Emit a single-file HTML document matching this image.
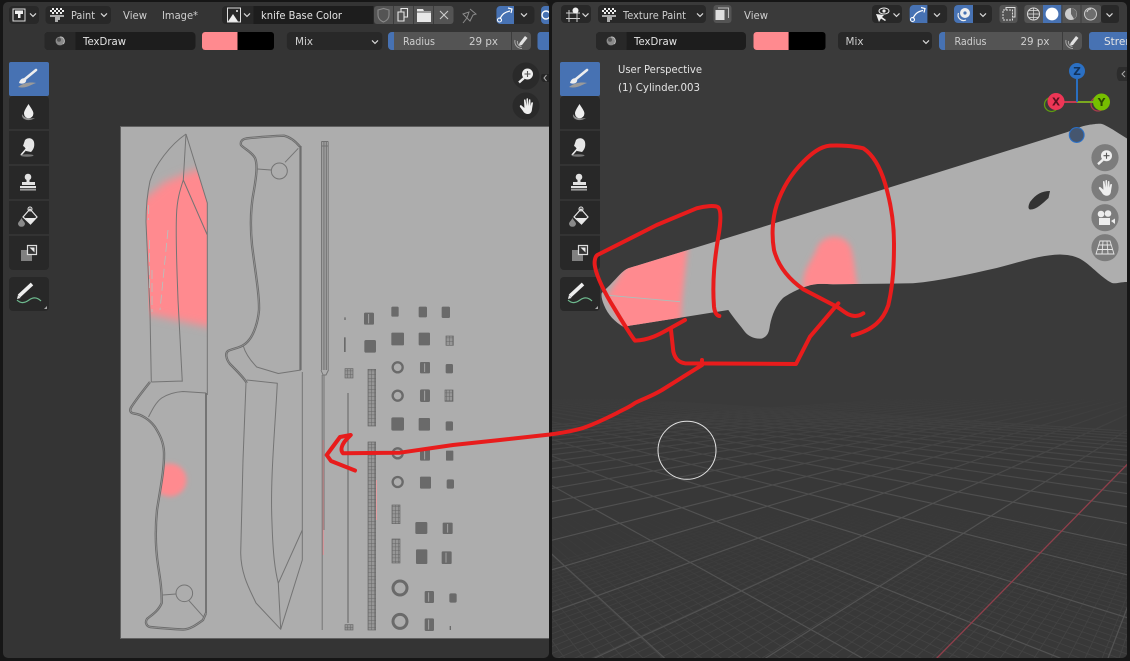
<!DOCTYPE html>
<html><head><meta charset="utf-8"><title>Texture Paint</title>
<style>
html,body{margin:0;padding:0;background:#161616;width:1130px;height:661px;overflow:hidden}
svg{display:block}
text{font-family:"DejaVu Sans","Liberation Sans",sans-serif;font-size:10.5px;fill:#cfcfcf}
.w{fill:#e4e4e4}
.k{fill:none;stroke:#747474;stroke-width:1;stroke-linejoin:round}
.h{fill:none;stroke:#6e6e6e;stroke-width:2.4;stroke-linejoin:round}
.hl{fill:none;stroke:#a8a8a8;stroke-width:.5;stroke-linejoin:round}
.r{fill:none;stroke:#e81c1c;stroke-width:4;stroke-linecap:round;stroke-linejoin:round}
.s{fill:#6a6a6a}
.c{fill:none;stroke:#d8d8d8;stroke-width:1.2}
.b{fill:#282828}
.bl{fill:#4772b3}
.g{fill:#545454}
.d{fill:#1d1d1d}
</style></head><body>
<svg width="1130" height="661" viewBox="0 0 1130 661" xmlns="http://www.w3.org/2000/svg">
<defs>
<linearGradient id="gm" gradientUnits="userSpaceOnUse" x1="0" y1="50" x2="0" y2="400"><stop offset="0" stop-color="#525252" stop-opacity="0"/><stop offset=".4" stop-color="#525252" stop-opacity=".45"/><stop offset="1" stop-color="#525252"/></linearGradient>
<linearGradient id="gn" gradientUnits="userSpaceOnUse" x1="0" y1="380" x2="0" y2="780"><stop offset="0" stop-color="#434343" stop-opacity="0"/><stop offset="1" stop-color="#434343"/></linearGradient>
<filter id="b5" x="-30%" y="-30%" width="160%" height="160%"><feGaussianBlur stdDeviation="4.2"/></filter>
<filter id="b3" x="-30%" y="-30%" width="160%" height="160%"><feGaussianBlur stdDeviation="2.8"/></filter>
<filter id="b2" x="-30%" y="-30%" width="160%" height="160%"><feGaussianBlur stdDeviation="2.4"/></filter>
<clipPath id="cl"><rect x="3" y="2" width="546" height="656" rx="5"/></clipPath>
<clipPath id="cr"><rect x="552" y="2" width="575" height="656" rx="5"/></clipPath>
<clipPath id="kn"><path d="M186 134L207.5 203V385H151L146 222C146 210 147 195 150 181C155 165 170 145 186 134Z"/></clipPath>
<clipPath id="hn"><path d="M164 446L164 462L157 510V540L206 540V440Z"/></clipPath>
<clipPath id="kn3"><path id="kp" d="M601.7 293L610 285C618 277 622 271 628.3 268.3L736.7 235L920 178L1066.7 132.3C1075 129 1082 126 1088.3 125C1095 124 1099 123.5 1102 124C1108 126 1118 133 1127 138.5V282C1120 282 1116 284 1112 283C1105 280 1095 270 1086.7 263.3C1078 256 1070 255 1060 254.5C1040 255 1020 262 996.7 268C970 274 940 281 913 283.3L833 284.3C825 284 820 283.5 814 284.5C805 285.5 790 293 783 298C776 305 772 315 770 325C769 332 768 336 762 338.5C755 339.5 748 336 745 332C740 325 735 320 728.3 310L623.3 326.7C615 322 608 315 604 305C602 300 601 296 601.7 293Z"/></clipPath>
<pattern id="ck" width="4" height="4" patternUnits="userSpaceOnUse"><rect width="2" height="2" fill="#eee"/><rect x="2" y="2" width="2" height="2" fill="#eee"/></pattern>
<pattern id="gd" width="9" height="11" patternUnits="userSpaceOnUse"><rect width="9" height="11" fill="#969696"/><path d="M0 0H9M0 0V11" stroke="#666" stroke-width="3"/></pattern>
<path id="ch" d="M-3 -1.6L0 1.4L3 -1.6" fill="none" stroke="#d8d8d8" stroke-width="1.2"/>
<path id="h1" d="M150 382C142 392 136 400 132 406C129 410 130 413 134 413.5C142 414.5 150 420 155 427C160 435 163.5 442 164 452C164.5 470 160 490 157 510C155 530 155.5 548 158 565C160 578 162 590 161.7 603C158 612 150 616 147 619C145 622 146 626 150 627C160 628 172 629 183 629.5C190 629.5 196 625 203 620L206 613"/>
<path id="h2" d="M246.7 383C245 379 238 372 230 364C226 359 225 353 228 351C234 348 243 348 249 340C254 334 258 322 259 310C259.5 295 255 270 252 245C250 225 251 205 254 190C256 178 258 165 255 158C252 152 243 148 241 145C240 141 243 139 246 138.5C260 137 275 136 284 135.7C290 137 296 142 300 146.7"/>
<g id="tools">
<rect x="9" y="96" width="40" height="174" rx="4" fill="#282828"/>
<rect x="9" y="62" width="40" height="34" fill="#4772b3" rx="2"/>
<path d="M9 130H49M9 165H49M9 200H49M9 235H49" stroke="#3e3e3e"/>
<rect x="9" y="277" width="40" height="34" rx="4" fill="#282828"/>
<path d="M36 70L25 79" stroke="#eee" stroke-width="2.6" stroke-linecap="round"/>
<path d="M19 83C20 79 23 77 26 79C27 82 24 85 19 83Z" fill="#eee"/>
<path d="M18 87C24 82 32 82 36 83C30 85 26 89 18 87Z" fill="#9a9a9a"/>
<path d="M22 114C21 120 29 122 35 118C29 119 24 118 22 114Z" fill="#8e8e8e"/>
<path d="M28.5 104C26 108 24 111 24 113.5A4.7 4.7 0 0 0 33.4 113.5C33.4 111 31 108 28.5 104Z" fill="#eee"/>
<path d="M25 140C28 137 33 138 34 142C35 147 33 150 31 152L26 151C26 149 25 147 23 146Z" fill="#e6e6e6"/>
<path d="M28 147L21 155" stroke="#eee" stroke-width="1.6"/>
<ellipse cx="27" cy="155.5" rx="6.5" ry="1.2" fill="#777"/>
<circle cx="28" cy="177" r="3.3" fill="#e2e2e2"/><rect x="26.5" y="179" width="3" height="3" fill="#e2e2e2"/>
<rect x="22" y="182" width="13" height="3" fill="#e2e2e2"/><rect x="20" y="186" width="16" height="2.2" fill="#e2e2e2"/><rect x="20" y="189" width="16" height="1.6" fill="#999"/>
<path d="M30 209L37 217L30.5 224L23 217Z" fill="none" stroke="#e4e4e4" stroke-width="1.2"/>
<path d="M25 218H36L30.5 224Z" fill="#e8e8e8"/><circle cx="30" cy="209" r="2" fill="none" stroke="#e4e4e4"/>
<path d="M21.5 218C20 221 18 222 18 224A3.6 3.6 0 0 0 25 224C25 222 23 221 21.5 218Z" fill="#8a8a8a"/>
<rect x="21" y="250" width="11" height="11" fill="#808080"/>
<rect x="27.5" y="245.5" width="9" height="9" fill="#333" stroke="#ddd" stroke-width="1.2"/><path d="M29.5 247.5H34.5V252.5Z" fill="#e8e8e8"/>
<path d="M32 284L19 296" stroke="#eee" stroke-width="3.6"/><path d="M17 299L18 295L20.5 298Z" fill="#eee"/>
<path d="M17 300C21 304 25 303 29 300C33 297 37 297 41 301" fill="none" stroke="#6db98e" stroke-width="1.2"/>
<path d="M47 306V309H44Z" fill="#aaa"/>
</g>
<g id="pen"><path d="M-1.5 2L4 -5L6.5 -3L1 4L-2 4.5Z" fill="#e2e2e2"/><path d="M-3.5 0A4.5 4.5 0 0 0 0.5 5.5M-6 -1A7 7 0 0 0 1 7.5" fill="none" stroke="#aaa" stroke-width="1"/></g>
<g id="mag"><circle cx="1.5" cy="-2" r="5.5" fill="#eee"/><path d="M-2 2L-7 6.5" stroke="#eee" stroke-width="2.4"/><path d="M-1.5 -2H4.5M1.5 -5V1" stroke="#555" stroke-width="1.1"/></g>
<g id="hand"><path d="M-6 1L-3 5C-2 7 0 8 2 8C5 8 6 5 6 3L7 -3C7 -4 5.5 -4 5.2 -3L4.6 0L4.4 -6C4.4 -7 3 -7 3 -6L2.6 0L2 -7C2 -8 .6 -8 .5 -7L.6 0L-.5 -6C-.7 -7 -2 -6.8 -2 -5.8L-1.6 2L-4.6 -.6C-5.6 -1.4 -6.6 0 -6 1Z" fill="#eee"/></g>
<g id="curve"><path d="M-5 4C-3 -1 0 -3 5 -4" fill="none" stroke="#fff" stroke-width="1.2"/><circle cx="-5.5" cy="5" r="2" fill="none" stroke="#fff" stroke-width="1.1"/><path d="M3 -7L7 -6L6 -2" fill="none" stroke="#fff" stroke-width="1.2"/></g>
<g id="sph"><circle r="4.4" fill="#8b8b8b"/><circle cx="-1" cy="-1.2" r="2" fill="#555"/><path d="M0 -4A4 4 0 0 1 3 3" stroke="#bbb" fill="none"/></g>
</defs>

<rect width="1130" height="661" fill="#161616"/>

<!-- LEFT PANEL -->
<g clip-path="url(#cl)">
<rect x="3" y="2" width="546" height="656" fill="#343434"/>
<!-- UV image -->
<rect x="120.5" y="126.5" width="440" height="512" fill="#adadad" stroke="#606060"/>
<g clip-path="url(#kn)"><path d="M138 204L165 182L192 171L215 166V328L190 323L140 312Z" fill="#ff8a8f" filter="url(#b5)"/></g>
<g clip-path="url(#hn)"><circle cx="170" cy="480" r="16.5" fill="#ff8a8f" filter="url(#b2)"/></g>
<path d="M323 440V555" stroke="#f4898e" stroke-width="1.4" opacity=".8"/>
<rect x="373" y="477" width="1.3" height="35" fill="#f39ca0"/><rect x="375.5" y="480" width="1.3" height="40" fill="#f39ca0"/>
<!-- first knife -->
<path class="k" d="M186 134C170 145 155 165 150 181C147 195 146 210 146 222L150 312L151.3 382M186 134L207.3 203V395M186 134L183.3 180L207.3 235M183.3 180C180 190 177 200 176.5 215C175.5 240 177 270 178 300L182.3 381.7M151.3 382L182.3 381"/>
<path d="M148.5 205V220M149.5 240V290M152 270V312M168 230L162 290L160 310" fill="none" stroke="#b2c4c0" stroke-width=".8" stroke-dasharray="9 4"/>
<use href="#h1" class="h"/><use href="#h1" class="hl"/>
<path d="M206 613V393" fill="none" stroke="#6e6e6e" stroke-width="1.8"/>
<path class="k" d="M206 393L183 391.5C175 392 168 394 161.7 398C156 402 152 410 148.5 417M176 594L162.7 595M189 600.7L203.3 616.7"/>
<circle class="k" cx="184.3" cy="593.3" r="8.3"/>
<!-- second knife -->
<use href="#h2" class="h"/><use href="#h2" class="hl"/>
<path d="M300.5 146V370" fill="none" stroke="#6e6e6e" stroke-width="2.2"/>
<path class="k" d="M301 370L278.3 373.5L256.7 367C250 360 245 352 243.3 346M271 170L257.3 169M285 162.3L298.3 148.3"/>
<circle class="k" cx="279.3" cy="171" r="8"/>
<path class="k" d="M246.7 380L277.3 383.3C275 430 270 480 272 523C273 555 275 570 278.3 583.3L280.7 629.3L256 603C250 590 241 575 240.7 553L243 460L246 383M302.3 372V560L280.7 629.3M302.3 530L278.3 583.3"/>
<!-- rods -->
<path d="M321.5 141.5V370M323.2 141.5V370M324.9 141.5V370M326.6 141.5V370M328.2 141.5V370M321.5 141.5H328.2M321.5 146H328.2M321 370L323 375H326L328.5 370" fill="none" stroke="#727272" stroke-width=".9"/>
<path d="M322.2 375V630M324 375V530" fill="none" stroke="#757575" stroke-width="1"/>
<path d="M348 393V623" stroke="#707070" stroke-width="1.2"/>
<!-- small islands -->
<g transform="translate(320 290) scale(.33333)">
<rect class="s" x="73" y="82" width="4" height="8"/><rect class="s" x="132" y="68" width="30" height="36" rx="4"/><rect class="s" x="214" y="50" width="22" height="30" rx="4"/><rect class="s" x="296" y="50" width="25" height="32" rx="4"/><rect class="s" x="365" y="50" width="25" height="34" rx="4"/>
<rect class="s" x="72" y="142" width="5" height="44"/><rect class="s" x="133" y="150" width="35" height="38" rx="5"/><rect class="s" x="214" y="128" width="38" height="38" rx="3"/><rect class="s" x="296" y="128" width="34" height="38" rx="3"/><rect x="378" y="138" width="22" height="28" fill="url(#gd)" stroke="#666" stroke-width="2"/>
<rect x="75" y="236" width="24" height="28" fill="url(#gd)" stroke="#666" stroke-width="2"/>
<rect x="144" y="238" width="23" height="170" fill="url(#gd)" stroke="#666" stroke-width="2"/>
<rect class="s" x="300" y="216" width="30" height="34" rx="3"/><rect class="s" x="377" y="222" width="22" height="28" rx="4"/>
<rect class="s" x="300" y="298" width="30" height="38" rx="5"/><rect x="375" y="300" width="24" height="34" fill="url(#gd)" stroke="#666" stroke-width="2"/>
<rect class="s" x="214" y="382" width="38" height="40" rx="5"/><rect class="s" x="296" y="384" width="34" height="38" rx="3"/><rect class="s" x="377" y="394" width="22" height="28" rx="4"/>
<rect x="144" y="456" width="23" height="564" fill="url(#gd)" stroke="#666" stroke-width="2"/>
<rect class="s" x="300" y="474" width="30" height="38" rx="4"/><rect class="s" x="378" y="482" width="22" height="30" rx="2"/>
<rect class="s" x="300" y="560" width="33" height="36" rx="3"/><rect class="s" x="380" y="568" width="22" height="28" rx="5"/>
<rect x="216" y="645" width="24" height="56" fill="url(#gd)" stroke="#666" stroke-width="2"/>
<rect class="s" x="286" y="696" width="36" height="36" rx="4"/><rect class="s" x="368" y="698" width="30" height="34" rx="3"/>
<rect x="216" y="747" width="24" height="72" fill="url(#gd)" stroke="#666" stroke-width="2"/>
<rect class="s" x="288" y="778" width="34" height="44" rx="3"/><rect class="s" x="365" y="784" width="30" height="38" rx="3"/>
<rect class="s" x="314" y="903" width="28" height="36" rx="4"/><rect class="s" x="388" y="910" width="22" height="28" rx="5"/>
<rect class="s" x="314" y="985" width="28" height="38" rx="4"/><rect class="s" x="389" y="1008" width="4" height="12"/>
<rect x="75" y="1004" width="24" height="16" fill="url(#gd)" stroke="#666" stroke-width="2"/>
<path d="M146 72V100M314 220V246M314 302V332M314 478V508M383 702V728M378 788V818M326 907V935M326 989V1019" stroke="#adadad" stroke-width="2.5"/>
<g fill="none" stroke="#6a6a6a" stroke-width="7"><circle cx="233" cy="232" r="15"/><circle cx="233" cy="317" r="15"/><circle cx="233" cy="490" r="15"/><circle cx="233" cy="576" r="15"/></g>
<g fill="none" stroke="#6a6a6a" stroke-width="9"><circle cx="240" cy="894" r="21"/><circle cx="240" cy="994" r="21"/></g>
</g>
<!-- header -->
<rect x="9" y="6" width="30" height="18" rx="4" class="b"/>
<rect x="13" y="9" width="12" height="12" fill="none" stroke="#ddd"/><path d="M15 10.5H23V14H20.5V18H18V14H15Z" fill="#eee"/>
<use href="#ch" x="33" y="15"/>
<rect x="45.5" y="6" width="65.5" height="18" rx="4" class="b"/>
<rect x="50" y="8" width="14" height="6" fill="url(#ck)"/><path d="M50 15H64V17H60V20H58V22H55V17H50Z" fill="#aaa"/>
<text x="71" y="19" textLength="24" lengthAdjust="spacingAndGlyphs">Paint</text><use href="#ch" x="104" y="15"/>
<text x="123" y="19" textLength="24" lengthAdjust="spacingAndGlyphs">View</text>
<text x="162" y="19" textLength="36" lengthAdjust="spacingAndGlyphs">Image*</text>
<rect x="222" y="6" width="151" height="18" rx="4" class="b"/>
<rect x="253.5" y="6" width="120" height="18" class="d"/>
<rect x="227.5" y="8" width="13" height="14" fill="none" stroke="#ddd"/><path d="M228 21.5L233 14L238 21.5Z" fill="#eee"/><circle cx="237" cy="11" r="1" fill="#eee"/>
<use href="#ch" x="247" y="15"/>
<text x="261" y="19" textLength="81" lengthAdjust="spacingAndGlyphs" class="w">knife Base Color</text>
<rect x="374" y="6" width="79.5" height="18" rx="3" class="g"/>
<path d="M393.5 6V24M413.5 6V24M433.5 6V24" stroke="#3c3c3c"/>
<path d="M378 10L383.5 8.5L389 10V15C389 19 386 21 383.5 22C381 21 378 19 378 15Z" fill="none" stroke="#8a8a8a" stroke-width="1.1"/>
<path d="M398 12H404V21H398ZM401 12V8.5H407.5V17H404" fill="none" stroke="#e6e6e6" stroke-width="1.1"/>
<path d="M417 11V9H423L424 11H431V22H417Z" fill="#e8e8e8"/><path d="M417 12H431" stroke="#545454"/>
<path d="M440 11L448 19M448 11L440 19" stroke="#ccc" stroke-width="1.1"/>
<path d="M470 9L476 14L473 15L470 21L467 18L463 23M467 18L463 14L469 12Z" fill="none" stroke="#8a8a8a" stroke-width="1"/>
<rect x="496.4" y="6" width="38" height="18" rx="4" class="b"/><path d="M500 6H514V24H500A4 4 0 0 1 496.4 20V10A4 4 0 0 1 500 6Z" class="bl"/>
<use href="#curve" x="505" y="15"/><use href="#ch" x="524" y="15"/>
<rect x="541" y="6" width="20" height="18" rx="4" class="bl"/><circle cx="546" cy="15" r="4" fill="none" stroke="#fff" stroke-width="1.4"/>
<rect x="44.5" y="32" width="151" height="18" rx="4" class="d"/>
<path d="M48.5 32H75.5V50H48.5A4 4 0 0 1 44.5 46V36A4 4 0 0 1 48.5 32Z" class="b"/><use href="#sph" x="60" y="41"/>
<text x="83" y="45" textLength="43" lengthAdjust="spacingAndGlyphs" class="w">TexDraw</text>
<rect x="202" y="32" width="72" height="18" rx="3" fill="#000"/><path d="M205 32H237.5V50H205A3 3 0 0 1 202 47V35A3 3 0 0 1 205 32Z" fill="#ff8a8f"/>
<rect x="286.8" y="32" width="95.5" height="18" rx="4" class="b"/><text x="295" y="45" textLength="18" lengthAdjust="spacingAndGlyphs">Mix</text><use href="#ch" x="375" y="42"/>
<rect x="388" y="32" width="143" height="18" rx="4" class="g"/><path d="M392 32H394V50H392A4 4 0 0 1 388 46V36A4 4 0 0 1 392 32Z" class="bl"/><path d="M511.5 32V50" stroke="#3c3c3c"/>
<text x="403" y="45" textLength="32" lengthAdjust="spacingAndGlyphs">Radius</text><text x="469" y="45" textLength="29" lengthAdjust="spacingAndGlyphs">29 px</text>
<use href="#pen" x="521" y="41"/>
<rect x="537.5" y="32" width="20" height="18" rx="3" class="bl"/>
<!-- tools -->
<use href="#tools"/>
<circle cx="526" cy="76" r="13.5" fill="#2a2a2a"/><use href="#mag" x="526" y="76"/>
<circle cx="526" cy="106" r="13.5" fill="#2a2a2a"/><use href="#hand" x="526" y="106"/>
<path d="M542 74H549V82H544C541 82 540 76 542 74Z" fill="#262626"/><path d="M546.5 75L544 78L546.5 81" fill="none" stroke="#aaa"/>
</g>

<!-- RIGHT PANEL -->
<g clip-path="url(#cr)">
<rect x="552" y="2" width="575" height="656" fill="#3a3a3a"/>
<rect x="552" y="430" width="575" height="228" fill="#383838"/>
<g transform="translate(550 380) scale(.37 .33333)" fill="none">
<path stroke="url(#gn)" stroke-width="2.4" d="M1800 -18L-900 835M1800 -18L-854 835M1800 -18L-808 835M1800 -18L-762 835M1800 -18L-716 835M1800 -18L-670 835M1800 -18L-624 835M1800 -18L-578 835M1800 -18L-532 835M1800 -18L-486 835M1800 -18L-440 835M1800 -18L-394 835M1800 -18L-348 835M1800 -18L-302 835M1800 -18L-256 835M1800 -18L-210 835M1800 -18L-164 835M1800 -18L-118 835M1800 -18L-72 835M1800 -18L-26 835M1800 -18L20 835M1800 -18L66 835M1800 -18L112 835M1800 -18L158 835M1800 -18L204 835M1800 -18L250 835M1800 -18L296 835M1800 -18L342 835M1800 -18L388 835M1800 -18L434 835M1800 -18L480 835M1800 -18L526 835M1800 -18L572 835M1800 -18L618 835M1800 -18L664 835M1800 -18L710 835M1800 -18L756 835M1800 -18L802 835M1800 -18L848 835M1800 -18L894 835M1800 -18L940 835M1800 -18L986 835M1800 -18L1032 835M1800 -18L1078 835M1800 -18L1124 835M1800 -18L1170 835M1800 -18L1216 835M1800 -18L1262 835M1800 -18L1308 835M1800 -18L1354 835M1800 -18L1400 835M1800 -18L1446 835M1800 -18L1492 835M1800 -18L1538 835M1800 -18L1584 835
M-500 5L-225 835M-500 5L-172 835M-500 5L-119 835M-500 5L-66 835M-500 5L-13 835M-500 5L40 835M-500 5L93 835M-500 5L146 835M-500 5L199 835M-500 5L252 835M-500 5L305 835M-500 5L358 835M-500 5L411 835M-500 5L464 835M-500 5L517 835M-500 5L570 835M-500 5L623 835M-500 5L676 835M-500 5L729 835M-500 5L782 835M-500 5L845 835M-500 5L898 835M-500 5L951 835M-500 5L1004 835M-500 5L1057 835M-500 5L1110 835M-500 5L1163 835M-500 5L1216 835M-500 5L1269 835M-500 5L1322 835M-500 5L1380 835M-500 5L1433 835M-500 5L1486 835M-500 5L1539 835M-500 5L1592 835M-500 5L1645 835M-500 5L1698 835M-500 5L1751 835M-500 5L1804 835M-500 5L1857 835M-500 5L1915 835M-500 5L1968 835M-500 5L2021 835M-500 5L2074 835M-500 5L2127 835M-500 5L2180 835M-500 5L2233 835M-500 5L2286 835M-500 5L2339 835M-500 5L2392 835M-500 5L2450 835M-500 5L2503 835M-500 5L2556 835M-500 5L2609 835M-500 5L2662 835M-500 5L2715 835M-500 5L2768 835M-500 5L2821 835M-500 5L2874 835M-500 5L2927 835"/>
<path stroke="url(#gm)" stroke-width="3.4" d="M1800 -18L1508 835M1800 -18L582 835M1800 -18L119 835M1800 -18L-344 835M1800 -18L-807 835M1800 -18L-1270 835M1800 -18L-1733 835M1800 -18L-2196 835M1800 -18L-2659 835M1800 -18L-3122 835M1800 -18L-3585 835M1800 -18L-4048 835M1800 -18L-4511 835M1800 -18L-4974 835M1800 -18L-5437 835M1800 -18L-5900 835M1800 -18L-6363 835M1800 -18L-6826 835M1800 -18L-7289 835M1800 -18L-7752 835M1800 -18L-8215 835
M-500 5L-225 835M-500 5L310 835M-500 5L845 835M-500 5L1380 835M-500 5L1915 835M-500 5L2450 835M-500 5L2985 835M-500 5L3520 835M-500 5L4055 835M-500 5L4590 835M-500 5L5125 835M-500 5L5660 835M-500 5L6195 835M-500 5L6730 835M-500 5L7265 835M-500 5L7800 835M-500 5L8335 835M-500 5L8870 835M-500 5L9405 835M-500 5L9940 835M-500 5L10475 835M-500 5L11010 835"/>
<path stroke="#8f3f4b" stroke-width="3.8" d="M1045 835L1600 208"/>
</g>
<!-- 3D knife -->
<use href="#kp" fill="#aeaeae"/>
<g clip-path="url(#kn3)">
<path d="M607 297L628 262L688 245L682 300L680 335L626 331Z" fill="#ff8a8f" filter="url(#b3)"/>
<path d="M803 285C803 268 812 262 817 248C822 234 845 232 851 248C855 262 855 275 858 290H803Z" fill="#ff8a8f" filter="url(#b3)"/>
</g>
<path d="M605 295L680 301.7" stroke="#a9c0bb" stroke-width=".9"/>
<path d="M1050 191C1042 191 1036 194 1030 202C1028 206 1028 209 1030 209.5C1036 210 1042 204 1048.5 198Z" fill="#333"/>
<circle cx="687" cy="450.3" r="29" fill="none" stroke="#e2e2e2" stroke-width="1"/>
<!-- gizmo -->
<circle cx="1051.5" cy="104.5" r="7" fill="none" stroke="#5f9a10" stroke-width="1.3"/><circle cx="1098" cy="104" r="7" fill="none" stroke="#a83a4c" stroke-width="1.3"/>
<path d="M1077 102H1061" stroke="#c43a50" stroke-width="2"/><path d="M1077 102H1095" stroke="#7aa820" stroke-width="2"/><path d="M1077 102V79" stroke="#2a6fc0" stroke-width="2"/>
<circle cx="1077" cy="71" r="8" fill="#2b70c4"/><circle cx="1056" cy="101.5" r="8.5" fill="#ee3656"/><circle cx="1101.5" cy="102" r="8.5" fill="#76bf00"/>
<text x="1077" y="75" text-anchor="middle" style="font-weight:bold;font-size:10.5px;fill:#12335c">Z</text>
<text x="1056" y="105.5" text-anchor="middle" style="font-weight:bold;font-size:10.5px;fill:#5a1020">X</text>
<text x="1101.5" y="106" text-anchor="middle" style="font-weight:bold;font-size:10.5px;fill:#2c4a00">Y</text>
<circle cx="1076.7" cy="135" r="7.4" fill="#45566f" stroke="#2a70c8" stroke-width="1.1"/>
<!-- nav buttons -->
<g fill="#7c7c7c"><circle cx="1105" cy="157.7" r="13.6"/><circle cx="1105" cy="187.7" r="13.6"/><circle cx="1105" cy="217.7" r="13.6"/><circle cx="1105" cy="247.7" r="13.6"/></g>
<use href="#mag" x="1105" y="157.7"/><use href="#hand" x="1105" y="187.7"/>
<circle cx="1101" cy="214" r="3.3" fill="#eee"/><circle cx="1108" cy="213.5" r="3.3" fill="#eee"/><rect x="1099" y="218" width="11" height="7" fill="#eee"/><path d="M1111 221L1115 218.5V224Z" fill="#eee"/>
<path d="M1100 241H1110L1114 254H1096ZM1099 245H1111M1097.5 249.5H1112.5M1103 241L1102 254M1107 241L1108 254" fill="none" stroke="#e6e6e6" stroke-width=".9"/>
<path d="M1119 67H1127V81H1119C1116 79 1116 69 1119 67Z" fill="#2c2c2c"/><path d="M1125 71L1122 74L1125 77" fill="none" stroke="#aaa"/>
<text x="618" y="73" textLength="84" lengthAdjust="spacingAndGlyphs" class="w">User Perspective</text>
<text x="618" y="91" textLength="82" lengthAdjust="spacingAndGlyphs" class="w">(1) Cylinder.003</text>
<!-- header -->
<rect x="561" y="5" width="30" height="18" rx="4" class="b"/>
<path d="M566 13H580M566 18.5H580M569 10V22M577 13V22" stroke="#ccc" stroke-width="1"/><circle cx="575.5" cy="10.5" r="3" fill="#eee"/>
<use href="#ch" x="585.5" y="15"/>
<rect x="598" y="5" width="108" height="18" rx="4" class="b"/>
<rect x="602" y="8" width="14" height="6" fill="url(#ck)"/><path d="M602 15H616V17H612V20H610V22H607V17H602Z" fill="#aaa"/>
<text x="623" y="19" textLength="63" lengthAdjust="spacingAndGlyphs">Texture Paint</text><use href="#ch" x="700" y="15"/>
<rect x="713.5" y="5" width="18" height="18" rx="3" class="g"/><rect x="715.5" y="10" width="9" height="10" fill="#ddd"/><path d="M718 8H728.5V18" fill="none" stroke="#bbb"/>
<text x="744" y="19" textLength="24" lengthAdjust="spacingAndGlyphs">View</text>
<rect x="872" y="5" width="30" height="18" rx="4" class="b"/>
<path d="M876 14L879 22L881 18.5L885 21L886 20L882 17L884 15Z" fill="#eee"/><ellipse cx="884" cy="11" rx="5" ry="3" fill="none" stroke="#eee"/><circle cx="884" cy="11" r="1.6" fill="#eee"/>
<use href="#ch" x="896.5" y="15"/>
<rect x="909.6" y="5" width="37.5" height="18" rx="4" class="b"/><path d="M913 5H927.4V23H913A4 4 0 0 1 909.6 19V9A4 4 0 0 1 913 5Z" class="bl"/><use href="#curve" x="918" y="14.5"/><use href="#ch" x="937" y="15"/>
<rect x="954" y="5" width="38" height="18" rx="4" class="b"/><path d="M958 5H973V23H958A4 4 0 0 1 954 19V9A4 4 0 0 1 958 5Z" class="bl"/>
<circle cx="965" cy="13" r="5" fill="#eee"/><circle cx="965" cy="13" r="1.6" fill="#4772b3"/><path d="M958.5 13A5.5 5.5 0 0 0 966 20" fill="none" stroke="#eee" stroke-width="1.2"/><use href="#ch" x="983" y="15"/>
<rect x="999.5" y="5" width="18" height="18" rx="3" class="g"/><path d="M1003 10H1012.5V20H1003Z" fill="none" stroke="#ddd" stroke-dasharray="2 1"/><path d="M1006 10V7.5H1015V17H1012.5" fill="none" stroke="#ddd"/>
<rect x="1024.3" y="5" width="77" height="18" rx="3" class="g"/><rect x="1043" y="5" width="18.5" height="18" class="bl"/>
<path d="M1061.8 5V23M1081 5V23" stroke="#3c3c3c"/>
<circle cx="1033.5" cy="14" r="6" fill="none" stroke="#ddd" stroke-width="1"/><path d="M1027.5 14H1039.5M1033.5 8V20M1029 10.5H1038M1029 17.5H1038" stroke="#ddd" stroke-width=".7"/>
<circle cx="1052" cy="14" r="6.4" fill="#fff"/>
<circle cx="1071" cy="14" r="6" fill="#ccc"/><path d="M1071 14V8A6 6 0 0 1 1074 19Z" fill="#666"/>
<circle cx="1090.5" cy="14" r="6" fill="#6e6e6e" stroke="#ccc"/><path d="M1087 12A4 4 0 0 1 1091 9" fill="none" stroke="#ddd"/>
<rect x="1101" y="5" width="18" height="18" rx="3" class="b"/><use href="#ch" x="1109.5" y="15"/>
<rect x="596" y="32" width="150" height="18" rx="4" class="d"/><path d="M600 32H626.6V50H600A4 4 0 0 1 596 46V36A4 4 0 0 1 600 32Z" class="b"/><use href="#sph" x="611" y="41"/>
<text x="634" y="45" textLength="43" lengthAdjust="spacingAndGlyphs" class="w">TexDraw</text>
<rect x="753.5" y="32" width="72" height="18" rx="3" fill="#000"/><path d="M756.5 32H788.6V50H756.5A3 3 0 0 1 753.5 47V35A3 3 0 0 1 756.5 32Z" fill="#ff8a8f"/>
<rect x="838" y="32" width="94" height="18" rx="4" class="b"/><text x="845.5" y="45" textLength="18" lengthAdjust="spacingAndGlyphs">Mix</text><use href="#ch" x="926" y="42"/>
<rect x="939" y="32" width="143" height="18" rx="4" class="g"/><path d="M943 32H945V50H943A4 4 0 0 1 939 46V36A4 4 0 0 1 943 32Z" class="bl"/><path d="M1062.5 32V50" stroke="#3c3c3c"/>
<text x="954.5" y="45" textLength="32" lengthAdjust="spacingAndGlyphs">Radius</text><text x="1020.5" y="45" textLength="29" lengthAdjust="spacingAndGlyphs">29 px</text>
<use href="#pen" x="1072" y="41"/>
<rect x="1089" y="32" width="50" height="18" rx="3" class="bl"/><text x="1104" y="45" class="w">Stren</text>
<use href="#tools" x="551"/>
</g>

<!-- red annotations -->
<g transform="translate(590 130) scale(.33333)" fill="none" stroke="#e81c1c" stroke-width="12" stroke-linecap="round" stroke-linejoin="round">
<path d="M285 570L240 595C210 612 180 630 135 632C118 610 100 580 70 530C45 490 20 440 15 410C12 395 15 380 22 375L200 285L320 235C345 228 375 225 385 232C395 245 392 280 385 320C375 380 366 450 372 530C374 548 380 556 388 558"/>
<path d="M820 550C805 560 790 560 775 553C760 545 750 535 740 530L640 478C600 450 565 410 552 360C545 320 546 270 560 225C575 180 600 135 640 95C665 70 690 50 720 47C750 45 790 48 820 55C850 75 870 110 885 160C900 210 912 270 912 340C912 400 910 460 895 525C880 570 850 600 788 616"/>
<path d="M243 600L250 665C255 685 265 697 285 700L618 702L660 620L745 520"/>
<path d="M336 690L335 705"/>
</g>
<path class="r" d="M702 365L662 390C650 397 645 398 635 403C628 408 624 409 617 413C605 419 595 424 583 428C570 432 560 433 550 434.5L500 440L453 445L400 452.7L343 453.3C340 450 342 445 345 441L350.7 435L340 437L326.7 455L331 461L355 470.5"/>
</svg>
</body></html>
